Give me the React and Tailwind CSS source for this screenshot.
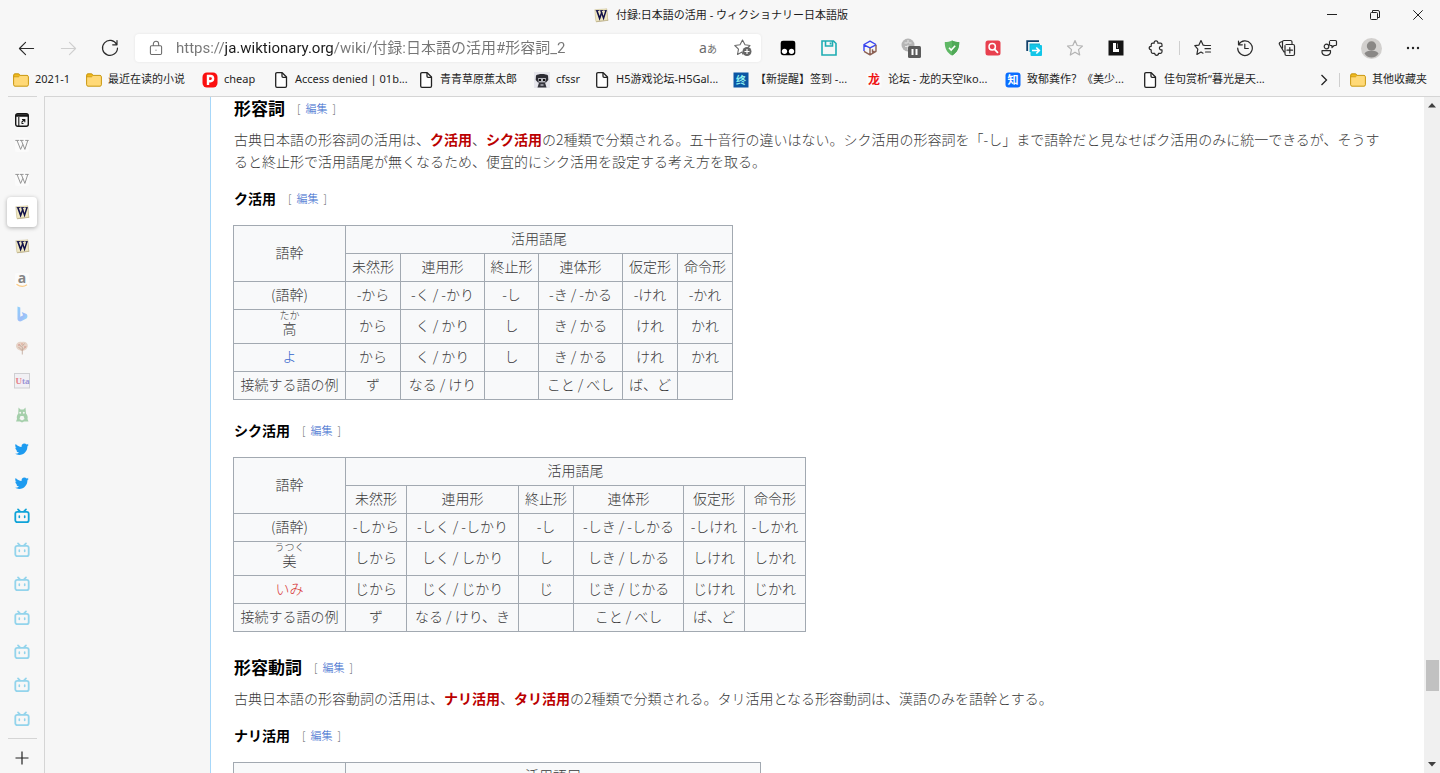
import React from "react";

const CHROME_FONT = "font-['Noto_Sans','Noto_Sans_CJK_SC',sans-serif]";
const PAGE_FONT = "font-['Noto_Sans_CJK_JP',sans-serif]";

/* ---------- shared icons ---------- */

function Line({ size = 18, width = 1.2, className = "text-[#2b2b2b]", children }) {
  return (
    <svg width={size} height={size} viewBox="0 0 18 18" fill="none" stroke="currentColor" strokeWidth={width} strokeLinecap="round" strokeLinejoin="round" className={className} aria-hidden="true">
      {children}
    </svg>
  );
}

function Folder() {
  return (
    <svg width="16" height="16" viewBox="0 0 16 16" aria-hidden="true">
      <path d="M.6 3.4c0-.9.6-1.5 1.4-1.5h3.4c.5 0 .9.2 1.2.6l.6.9H14c.8 0 1.4.6 1.4 1.4v8c0 .8-.6 1.4-1.4 1.4H2c-.8 0-1.4-.6-1.4-1.4z" fill="#ffd977" stroke="#c9970f" />
      <path d="M.8 4.8h4.4c.5 0 .8-.2 1-.5l.8-.9-.8-.9c-.2-.3-.5-.5-.8-.5H2C1.200 2 .8 2.600.8 3.400z" fill="#f2bb1d" stroke="#c9970f" strokeWidth=".8" />
    </svg>
  );
}

function PageIcon() {
  return (
    <svg width="16" height="16" viewBox="0 0 16 16" fill="#fff" stroke="#222" strokeWidth="1.3" strokeLinejoin="round" aria-hidden="true">
      <path d="M2.700 2c0-.8.5-1.300 1.300-1.300h5.200l4.300 4.300v9c0 .8-.5 1.300-1.300 1.300H4c-.8 0-1.300-.5-1.300-1.300z" />
      <path d="M9 .9V4.200c0 .7.4 1.100 1.100 1.100h3.300" fill="none" />
    </svg>
  );
}

function WikTile({ size = 15 }) {
  return (
    <svg width={size} height={size} viewBox="0 0 16 16" aria-hidden="true">
      <path d="M1 2.300 13.800.8 15.300 13.500 2.200 15.300z" fill="#b9ad8a" />
      <path d="M.8 1.800 13.600.9l.9 12L2 14.200z" fill="#f0e8c4" stroke="#cfc49b" strokeWidth=".6" />
      <path d="M1.800 2.700h4M6.700 2.700h3.400M11 2.700h2.600" stroke="#101048" strokeWidth=".9" />
      <path d="M3 2.700 6 11 8.400 4.500" fill="none" stroke="#101048" strokeWidth="1.700" />
      <path d="M7.300 2.700 10.200 11 12.800 2.700" fill="none" stroke="#101048" strokeWidth="1.500" />
    </svg>
  );
}

/* ---------- title bar ---------- */

function TitleBar() {
  return (
    <header className="flex h-[30px] items-center">
      <div className="w-[108px]" />
      <div className="flex flex-1 items-center justify-center gap-[7px] pl-[2px]">
        <WikTile />
        <h1 className="font-['Noto_Sans','Noto_Sans_CJK_JP',sans-serif] text-[11px] text-[#1b1b1b]">付録:日本語の活用 - ウィクショナリー日本語版</h1>
      </div>
      <div className="-ml-[22px] flex text-[#222]">
        <button aria-label="最小化" className="flex w-[43px] items-center justify-center">
          <svg width="10" height="10" stroke="currentColor" fill="none"><path d="M0 4.500h10" /></svg>
        </button>
        <button aria-label="元に戻す" className="flex w-[43px] items-center justify-center">
          <svg width="10" height="10" stroke="currentColor" fill="none"><path d="M.5 3.500q0-1 1-1h5q1 0 1 1v5q0 1-1 1h-5q-1 0-1-1zM2.500 2V.5h5.500q1.500 0 1.500 1.500v5.500H8" /></svg>
        </button>
        <button aria-label="閉じる" className="flex w-[44px] items-center justify-center">
          <svg width="10" height="10" stroke="currentColor" fill="none"><path d="M.3.300l9.400 9.400M9.700.300.300 9.700" /></svg>
        </button>
      </div>
    </header>
  );
}

/* ---------- toolbar ---------- */

const extensions = [
  ["Tampermonkey", (
    <svg width="16" height="16" viewBox="0 0 16 16"><path d="M3 .8h10q2.300 0 2.300 2.300v9.500q0 2.600-2.600 2.600H3.300Q.7 15.200.7 12.600V3.100Q.7.800 3 .800z" fill="#000" /><circle cx="4.500" cy="11.300" r="2.600" fill="#fff" /><circle cx="11.500" cy="11.300" r="2.600" fill="#fff" /></svg>
  )],
  ["保存", (
    <svg width="16" height="16" viewBox="0 0 16 16" fill="none" stroke="#1fadb3" strokeWidth="1.600"><path d="M1 1h11.500L15 3.500V15H1zM4.500 1v5h7V1M9.500 2.500v2" /></svg>
  )],
  ["キューブ", (
    <svg width="16" height="16" viewBox="0 0 16 16" fill="none" strokeWidth="1.400" strokeLinejoin="round"><path d="M2 11V4.500L8 1.200l6 3.300M2 4.800l6 3 6-3" stroke="#3a45f0" /><path d="M14 4.800v6.500l-6 3.500-6-3.500M8 8v6.500M10.500 9.200v3l2-1" stroke="#8b5f52" /></svg>
  )],
  ["一時停止", (
    <svg width="20" height="20" viewBox="0 0 20 20"><circle cx="7" cy="7" r="6.500" fill="#b5b5b5" /><path d="M3.500 5h3M8 5h2.500M7 2v3M4 8.500h6M7 7v5" stroke="#e6e6e6" /><rect x="7" y="8" width="13" height="12" rx="1.500" fill="#5c5c5c" /><path d="M11.500 11v6M15.500 11v6" stroke="#fff" strokeWidth="2" /></svg>
  )],
  ["保護", (
    <svg width="16" height="16" viewBox="0 0 16 16"><path d="M8 .5c2.300 1 4.600 1.500 7.200 1.600C15.500 8 13 13 8 15.600 3 13 .5 8 .8 2.100 3.400 2 5.700 1.500 8 .5z" fill="#5fb865" /><path d="M8 .5c2.300 1 4.600 1.500 7.200 1.600C15.500 8 13 13 8 15.600z" fill="#50a957" /><path d="m5 7.800 2.200 2.200 4-4.200" fill="none" stroke="#fff" strokeWidth="1.600" /></svg>
  )],
  ["検索", (
    <svg width="16" height="16" viewBox="0 0 16 16"><rect x=".5" y=".5" width="15" height="15" rx="2.500" fill="#e8404f" /><circle cx="7.200" cy="6.800" r="3.200" fill="none" stroke="#fff" strokeWidth="1.500" /><path d="m9.600 9.300 2.900 3" stroke="#fff" strokeWidth="1.800" strokeLinecap="round" /></svg>
  )],
  ["転送", (
    <svg width="16" height="16" viewBox="0 0 16 16"><path d="M1.200 11V1.200H13" fill="none" stroke="#12406b" strokeWidth="1.800" /><path d="M3.500 3.500H14V6H7v6H3.500z" fill="#16b5d6" /><rect x="4.500" y="5" width="11.500" height="11" rx="1" fill="#12c6e8" /><path d="M6 10.500h7M10.300 7.500l3 3-3 3" fill="none" stroke="#fff" strokeWidth="1.700" /></svg>
  )],
  ["お気に入り", (
    <Line className="text-[#b4b4b4]"><path d="m9 1.500 2.200 5 5.300.5-4 3.600 1.200 5.400L9 13.200 4.300 16l1.200-5.400-4-3.600 5.300-.5z" /></Line>
  )],
  ["L", (
    <svg width="16" height="16" viewBox="0 0 16 16"><path d="M.5.5h15v15H.5z" fill="#151515" /><path d="M5 3h3v6h3v3H5z" fill="#fff" /><path d="M9.500 3.500V8" stroke="#8b8b8b" /></svg>
  )],
  ["拡張機能", (
    <Line><path d="M6.200 4.200c-.3-1.600.7-2.400 1.800-2.400s2.100.8 1.800 2.400h2.700c.9 0 1.500.6 1.500 1.500v1.600c-1.700-.3-2.600.7-2.600 1.800s.9 2.100 2.600 1.800v1.900c0 .9-.6 1.500-1.500 1.500h-2c0 1.200-.8 2-1.900 2s-1.900-.8-1.900-2h-2c-.9 0-1.500-.6-1.500-1.500v-2c-1.200 0-2-.7-2-1.700s.8-1.800 2-1.800V5.700c0-.9.600-1.500 1.500-1.500z" /></Line>
  )],
];

const browserTools = [
  ["お気に入り一覧", <Line><path d="M11 6.500 9.200 6.200 7 1.500l-2.200 4.700-4 .5 3 3.500-.9 5.200L7 13l2 1.200M11.500 6.500h5M11 9.700h5.500M11.500 13h5" /></Line>],
  ["履歴", <Line><path d="M2.500 2v3.800h3.800M2.700 5.500A7.300 7.300 0 1 1 1.700 9M8.800 5v4.500h3.500" /></Line>],
  ["コレクション", <Line><path d="M7 13H6L1.500 5.500c-.5-1 0-1.800.8-2.200l2-.8M4.500 9V3c0-.9.600-1.500 1.500-1.500h6.500c.9 0 1.500.6 1.500 1.500v1.500M8 5.500h7c.9 0 1.500.6 1.500 1.500v8c0 .9-.6 1.500-1.500 1.500H8.500c-.9 0-1.500-.6-1.500-1.500V6.500M11.800 8.500v5.500M9 11.200h5.500" /></Line>],
  ["フィードバック", <Line><circle cx="6.500" cy="7.500" r="2.300" /><path d="M2 11.700h8.500c.6 3-1.600 4.800-4.300 4.800S1.500 14.700 2 11.700zM10.200 1.500h5.300c.6 0 1 .4 1 1v3c0 .6-.4 1-1 1h-1.300L12 8.500v-2h-1.500c-.6 0-1-.4-1-1v-3" /></Line>],
  ["プロフィール", (
    <svg width="21" height="21" viewBox="0 0 21 21"><circle cx="10.500" cy="10.500" r="10.500" fill="#d2d0ce" /><circle cx="10.500" cy="8" r="4.700" fill="#8a8886" /><path d="M3.500 15.500c1.500-2.300 4-2.700 7-2.700s5.500.4 7 2.700c-1.500 2.500-4 4-7 4s-5.500-1.500-7-4z" fill="#8a8886" /></svg>
  )],
  ["設定など", <svg width="14" height="4" fill="#222"><circle cx="2" cy="2" r="1.200" /><circle cx="7" cy="2" r="1.200" /><circle cx="12" cy="2" r="1.200" /></svg>],
];

function Toolbar() {
  const nav = "flex w-[42px] items-center justify-center";
  return (
    <div className="flex h-9 items-center pr-[6px] pl-[5px]">
      <button aria-label="戻る" className={nav}><Line size={17}><path d="M16.500 9h-15M8 2.500 1.500 9 8 15.500" /></Line></button>
      <button aria-label="進む" className={nav}><Line size={17} className="text-[#cfcfcf]"><path d="M1.500 9h15M10 2.500 16.500 9 10 15.500" /></Line></button>
      <button aria-label="更新" className={nav}><Line><path d="M15.700 5.500A7.500 7.500 0 1 0 16.500 9M16 1.500v4.300h-4.300" /></Line></button>
      <form className="ml-1 flex h-7 min-w-0 flex-1 items-center rounded-[4px] bg-white shadow-[0_0_3px_rgba(0,0,0,0.08)]" onSubmit={(e) => e.preventDefault()}>
        <button type="button" aria-label="サイト情報" className="flex w-[41px] shrink-0 items-center justify-center">
          <Line size={16} className="text-[#6b6b6b]"><path d="M4 6.500h10c.8 0 1.300.5 1.300 1.300v7.200c0 .8-.5 1.300-1.300 1.300H4c-.8 0-1.300-.5-1.300-1.300V7.800C2.700 7 3.200 6.500 4 6.500zM6 6.500V4.500c0-1.800 1.200-3 3-3s3 1.200 3 3v2M9 11.300v.3" /></Line>
        </button>
        <input aria-label="アドレス" defaultValue="https://ja.wiktionary.org/wiki/付録:日本語の活用#形容詞_2" className="min-w-0 flex-1 bg-[linear-gradient(90deg,#767676_49px,#1b1b1b_49px,#1b1b1b_157px,#767676_157px)] bg-clip-text font-['Roboto','Noto_Sans_CJK_JP',sans-serif] text-[15px] text-transparent outline-none" />
        <button type="button" aria-label="翻訳" className="w-[34px] shrink-0 font-['Noto_Sans','Noto_Sans_CJK_JP',sans-serif] text-[14px] leading-5 text-[#6b6b6b]">a<span className="text-[10px]">あ</span></button>
        <button type="button" aria-label="お気に入りに追加" className="flex w-[36px] shrink-0 items-center justify-center">
          <svg width="18" height="18" viewBox="0 0 18 18" fill="none" aria-hidden="true"><path d="M9 15.500 8 13l-4.500 2.500 1-5.400L.8 6.500l5.200-.7L8.500 1 11 5.800l5 .7-2 2" stroke="#6b6b6b" strokeWidth="1.100" strokeLinejoin="round" /><circle cx="13" cy="12.500" r="4.500" fill="#666" /><path d="M13 10v5M10.500 12.500h5" stroke="#fff" strokeWidth="1.100" /></svg>
        </button>
      </form>
      <div className="ml-[6px] flex items-center">
        {extensions.map(([name, icon]) => (
          <button key={name} aria-label={name} className="flex w-[41px] items-center justify-center">{icon}</button>
        ))}
        <div className="mx-[2px] h-[14px] w-px bg-[#cfcfcf]" />
        {browserTools.map(([name, icon]) => (
          <button key={name} aria-label={name} className="flex w-[42px] items-center justify-center">{icon}</button>
        ))}
      </div>
    </div>
  );
}

/* ---------- bookmarks ---------- */

const pIcon = (
  <svg width="16" height="16" viewBox="0 0 16 16"><rect x=".5" y=".5" width="15" height="15" rx="4.500" fill="#fb0f0f" /><path d="M6 13V4h2.500a2.600 2.600 0 0 1 0 5.200H6" fill="none" stroke="#fff" strokeWidth="2.400" /></svg>
);
const catIcon = (
  <svg width="16" height="16" viewBox="0 0 16 16"><rect width="16" height="16" fill="#e6e6ec" /><path d="M2 3.500C4 1.500 12 1.500 14 3.500l.3 4.500-2.300 2.500H4L1.700 8z" fill="#2c2c33" /><path d="M4 6h8l-.8 4.500H4.800z" fill="#b4b4bc" /><path d="M5 7h2v2H5zM9 7h2v2H9z" fill="#111" /><path d="M5 10.500h6l1.500 5h-9z" fill="#34343c" /><path d="M6.500 12h3v2h-3z" fill="#8f8f98" /></svg>
);
const glyphTile = (char, bg, fg, size) => (
  <svg width="16" height="16" viewBox="0 0 16 16"><rect x=".5" y=".5" width="15" height="15" rx={char === "知" ? 3 : 0} fill={bg} /><text x="8" y="12" textAnchor="middle" fontFamily="Noto Sans CJK SC" fontWeight="700" fontSize={size} fill={fg}>{char}</text></svg>
);

const bookmarks = [
  ["2021-1", <Folder />, "w-[73px]"],
  ["最近在读的小说", <Folder />, "w-[116px]"],
  ["cheap", pIcon, "w-[71px]"],
  ["Access denied | 01b...", <PageIcon />, "w-[145px]"],
  ["青青草原蕉太郎", <PageIcon />, "w-[116px]"],
  ["cfssr", catIcon, "w-[60px]"],
  ["H5游戏论坛-H5Gal...", <PageIcon />, "w-[139px]"],
  ["【新提醒】签到 -...", glyphTile("终", "#0b56a4", "#8ff0f0", 10), "w-[133px]"],
  ["论坛 - 龙的天空lko...", glyphTile("龙", "#fbfbfb", "#ef1414", 12), "w-[139px]"],
  ["致郁粪作？《美少...", glyphTile("知", "#0a6cff", "#ffffff", 11), "w-[137px]"],
  ["佳句赏析“暮光是天...", <PageIcon />, "w-[130px]"],
];

function Bookmarks() {
  return (
    <nav aria-label="收藏夹" className="flex h-[30px] items-center pr-[13px] pb-[3px] pl-[13px] text-[11px] text-[#1f1f1f]">
      {bookmarks.map(([label, icon, width]) => (
        <a key={label} href="#" className={`flex shrink-0 items-center gap-[6px] whitespace-nowrap ${width}`}>
          {icon}
          <span>{label}</span>
        </a>
      ))}
      <button aria-label="更多" className="ml-auto flex w-[18px] justify-center">
        <svg width="8" height="12" fill="none" stroke="#222" strokeWidth="1.300"><path d="m1.500 1 5 5-5 5" /></svg>
      </button>
      <div className="mr-[10px] ml-[6px] h-[14px] w-px bg-[#cfcfcf]" />
      <a href="#" className="flex items-center gap-[6px] whitespace-nowrap">
        <Folder />
        <span>其他收藏夹</span>
      </a>
    </nav>
  );
}

/* ---------- vertical tabs ---------- */

const wikipedia = (
  <svg width="16" height="16" viewBox="0 0 16 16"><rect x="1" y="1" width="14" height="14" rx="2" fill="#fbfbfb" /><path d="M1.300 3.400h4M6 3.400h3.600M11.200 3.400h3.500M3 3.400l3.600 9 2.200-5M7.300 3.400l3.600 9 2.900-9" fill="none" stroke="#8b8b8b" strokeWidth=".9" /></svg>
);
const amazon = (
  <svg width="16" height="16" viewBox="0 0 16 16"><rect x="1" y="1" width="14" height="14" rx="2" fill="#fbfbfb" /><text x="8" y="11" textAnchor="middle" fontFamily="Open Sans, sans-serif" fontWeight="700" fontSize="14" fill="#858585">a</text><path d="M2.500 12.300c3.500 2.600 7.500 2.600 10.500.5" fill="none" stroke="#fbcb85" strokeWidth="1.300" /></svg>
);
const bing = (
  <svg width="16" height="16" viewBox="0 0 16 16"><defs><linearGradient id="bing" x1="0" y1="0" x2="1" y2="1"><stop stopColor="#8fd0fb" /><stop offset=".6" stopColor="#9fbdf8" /><stop offset="1" stopColor="#8fe0f8" /></linearGradient></defs><path d="M3.500.5 6.300 1.500v9.200l2.800-1.500L7.700 6l4.800 2c1.300.8 1.300 3.600 0 4.600l-5.400 2.700c-1.500.5-3.600-.4-3.600-2.200z" fill="url(#bing)" /></svg>
);
const tree = (
  <svg width="16" height="16" viewBox="0 0 16 16"><path d="M8 2c3-1 6 .8 5.800 4-.3 2.500-2 4.300-5 5C5 11 2 8.500 2 6c0-3 3-5 6-4z" fill="#e6d3c6" /><path d="M8.300 14.500V7M8 10.500 4.500 7M8.500 10l3.500-3.500M5 4l2.500 3M10.500 3.500 8 6.500" stroke="#bca294" fill="none" strokeWidth=".8" /><circle cx="5" cy="5" r="1" fill="#dba9a0" /><circle cx="11" cy="7" r="1" fill="#dca79a" /><circle cx="8" cy="4" r="1" fill="#e0b5a4" /></svg>
);
const uta = (
  <svg width="16" height="16" viewBox="0 0 16 16"><rect x=".5" y=".5" width="15" height="14.500" fill="#f1f0f4" stroke="#cfcfd2" /><text x="1.500" y="11" fontFamily="Liberation Sans Narrow" fontWeight="700" fontSize="9" fill="#e6808a">U<tspan fill="#9a94d6">ta</tspan></text></svg>
);
const greenCat = (
  <svg width="16" height="16" viewBox="0 0 16 16"><path d="M4.500.5 6.500 2.500h3l2-2 .5 6c1.500 1.500 2 3.500 1.500 5.500l1 2.500H10L8 15.500 6 14.500H2l1-2.500C2.500 10 3 8 4.300 6.500z" fill="#a5cfab" /><circle cx="6.200" cy="5.700" r="1" fill="#f5f5f5" /><circle cx="9.800" cy="5.700" r="1" fill="#f5f5f5" /><path d="M6.500 9h3l1 3-2.500 1.500L5.500 12z" fill="#f5f5f5" /></svg>
);
const twitter = (
  <svg width="14" height="14" viewBox="0 0 24 24" fill="#1d9bf0"><path d="M23.600 4.900c-.9.400-1.800.6-2.800.8 1-.6 1.800-1.600 2.100-2.700-.9.600-2 1-3.100 1.200a4.900 4.900 0 0 0-8.400 4.500C7.300 8.500 3.700 6.600 1.300 3.600a4.900 4.900 0 0 0 1.500 6.600c-.8 0-1.600-.2-2.200-.6v.1c0 2.400 1.700 4.400 3.900 4.800-.7.200-1.500.2-2.200.1.600 2 2.400 3.400 4.600 3.400A9.900 9.900 0 0 1-.4 20a13.900 13.900 0 0 0 7.600 2.200c9.100 0 14.300-7.700 14-14.700 1-.7 1.800-1.600 2.400-2.600z" /></svg>
);
const bili = (color) => (
  <svg width="16" height="16" viewBox="0 0 16 16" fill="none" stroke={color} strokeLinecap="round"><rect x="1.300" y="3.800" width="13.400" height="10.400" rx="2" strokeWidth="1.800" /><path d="m4 1.300 2 2M12 1.300l-2 2" strokeWidth="1.700" /><path d="M5.300 8v1.500M10.700 8v1.500" strokeWidth="1.600" /></svg>
);
const dim = bili("#93d4ec");

const tabs = [
  ["Wikipedia 1", wikipedia], ["Wikipedia 2", wikipedia],
  ["ウィクショナリー 1", <WikTile />, true], ["ウィクショナリー 2", <WikTile />],
  ["Amazon", amazon], ["Bing", bing], ["木", tree], ["Uta", uta], ["猫", greenCat],
  ["Twitter 1", twitter], ["Twitter 2", twitter], ["bilibili 1", bili("#0fa3d8")],
  ["bilibili 2", dim], ["bilibili 3", dim], ["bilibili 4", dim], ["bilibili 5", dim], ["bilibili 6", dim], ["bilibili 7", dim],
];

function TabStrip() {
  return (
    <aside className="flex w-11 shrink-0 flex-col items-center">
      <div className="h-px w-[29px] bg-[#d5d5d5]" />
      <button aria-label="タブ操作メニュー" className="flex h-[31px] items-center justify-center pt-[14px]">
        <svg width="14" height="14" viewBox="0 0 14 14" fill="none" stroke="#161616"><rect x=".7" y=".7" width="12.600" height="12.600" rx="2" strokeWidth="1.400" /><path d="M1 2.500h12" strokeWidth="2.500" /><path d="M3.800 4v9M6.500 9.500l3-3M7 6.500h2.800v2.700M6.500 10.500h2" strokeWidth="1.100" /></svg>
      </button>
      <ul className="flex w-full min-h-0 flex-1 flex-col">
        {tabs.map(([name, icon, active]) => (
          <li key={name} className="flex min-h-0 flex-1 items-center justify-center">
            <button aria-label={name} className={active ? "flex size-[30px] items-center justify-center rounded-[4px] bg-white shadow-[0_1px_4px_rgba(0,0,0,0.3)]" : "flex size-[30px] items-center justify-center"}>{icon}</button>
          </li>
        ))}
      </ul>
      <div className="mt-[2px] h-px w-[29px] bg-[#d5d5d5]" />
      <button aria-label="新しいタブ" className="flex h-[34px] items-center justify-center pt-1">
        <svg width="14" height="14" stroke="#222" strokeWidth="1.200"><path d="M7 .5v13M.5 7h13" /></svg>
      </button>
    </aside>
  );
}

/* ---------- article ---------- */

function Heading({ level = 4, className = "", children }) {
  const Tag = level === 3 ? "h3" : "h4";
  const size = level === 3 ? "text-[17px] leading-[22px]" : "text-[14px] leading-[22px]";
  return (
    <div className={`flex items-center gap-3 ${className}`}>
      <Tag className={`font-bold text-black ${size}`}>{children}</Tag>
      <span className="flex gap-[5px] text-[11px] leading-[22px] text-[#54595d]">
        [<a href="#" className="text-[#3366cc]">編集</a>]
      </span>
    </div>
  );
}

function Red({ children }) {
  return <a href="#" className="font-bold text-[#ba0000]">{children}</a>;
}

const forms = ["未然形", "連用形", "終止形", "連体形", "仮定形", "命令形"];
const ku = ["から", "く / かり", "し", "き / かる", "けれ", "かれ"];
const shiku = ["しから", "しく / しかり", "し", "しき / しかる", "しけれ", "しかれ"];
const ruby = (base, top) => <ruby>{base}<rt className="text-[10px] leading-[12px]">{top}</rt></ruby>;

const kuRows = [
  ["(語幹)", "-から", "-く / -かり", "-し", "-き / -かる", "-けれ", "-かれ"],
  [ruby("高", "たか"), ...ku],
  [<a href="#" className="text-[#3366cc]">よ</a>, ...ku],
  ["接続する語の例", "ず", "なる / けり", "", "こと / べし", "ば、ど", ""],
];
const shikuRows = [
  ["(語幹)", "-しから", "-しく / -しかり", "-し", "-しき / -しかる", "-しけれ", "-しかれ"],
  [ruby("美", "うつく"), ...shiku],
  [<a href="#" className="text-[#d73333]">いみ</a>, "じから", "じく / じかり", "じ", "じき / じかる", "じけれ", "じかれ"],
  ["接続する語の例", "ず", "なる / けり、き", "", "こと / べし", "ば、ど", ""],
];

function Conjugation({ cols, rows }) {
  const cell = "border border-[#a2a9b1] px-0 pt-0 pb-1 text-center font-light";
  const rubyCell = "border border-[#a2a9b1] p-0 text-center align-top leading-[14px] font-light";
  return (
    <table className="mt-4 -ml-px table-fixed border-collapse bg-[#f8f9fa] leading-[22px] whitespace-nowrap">
      <colgroup>{cols.map((c, i) => <col key={i} className={c} />)}</colgroup>
      <thead>
        <tr className="h-7"><th rowSpan={2} className={cell}>語幹</th><th colSpan={6} className={cell}>活用語尾</th></tr>
        <tr className="h-7">{forms.map((f) => <th key={f} className={cell}>{f}</th>)}</tr>
      </thead>
      <tbody>
        {rows.map((row, r) => (
          <tr key={r} className={r === 1 ? "h-[34px]" : "h-7"}>
            {row.map((c, i) => <td key={i} className={i === 0 && r === 1 ? rubyCell : cell}>{c}</td>)}
          </tr>
        ))}
      </tbody>
    </table>
  );
}

function Article() {
  return (
    <main className={`min-w-0 flex-1 overflow-hidden border-l border-[#a7d7f9] bg-white pr-8 pl-[23px] text-[14px] leading-[22px] font-light text-[#3a3a3a] ${PAGE_FONT}`}>
      <Heading level={3}>形容詞</Heading>
      <p className="mt-[9px]">
        古典日本語の形容詞の活用は、<Red>ク活用</Red>、<Red>シク活用</Red>の2種類で分類される。五十音行の違いはない。シク活用の形容詞を「-し」まで語幹だと見なせばク活用のみに統一できるが、そうすると終止形で活用語尾が無くなるため、便宜的にシク活用を設定する考え方を取る。
      </p>
      <Heading className="mt-[15px]">ク活用</Heading>
      <Conjugation cols={["w-[112px]", "w-[55px]", "w-[84px]", "w-[54px]", "w-[84px]", "w-[55px]", "w-[55px]"]} rows={kuRows} />
      <Heading className="mt-[19px]">シク活用</Heading>
      <Conjugation cols={["w-[112px]", "w-[61px]", "w-[112px]", "w-[55px]", "w-[110px]", "w-[61px]", "w-[61px]"]} rows={shikuRows} />
      <Heading level={3} className="mt-6">形容動詞</Heading>
      <p className="mt-[9px]">
        古典日本語の形容動詞の活用は、<Red>ナリ活用</Red>、<Red>タリ活用</Red>の2種類で分類される。タリ活用となる形容動詞は、漢語のみを語幹とする。
      </p>
      <Heading className="mt-[15px]">ナリ活用</Heading>
      <Conjugation cols={["w-[112px]", "w-[55px]", "w-[112px]", "w-[55px]", "w-[83px]", "w-[55px]", "w-[55px]"]} rows={kuRows} />
    </main>
  );
}

function ScrollBar() {
  return (
    <div className="flex w-4 shrink-0 flex-col items-center bg-[#f0f0f0] py-[6px]">
      <svg width="8" height="5" fill="#404040"><path d="M4 0l4 4.500H0z" /></svg>
      <div className="grow-[553]" />
      <div className="h-[31px] w-[13px] bg-[#c1c1c1]" />
      <div className="grow-[71]" />
      <svg width="8" height="5" fill="#404040"><path d="M4 4.500 0 0h8z" /></svg>
    </div>
  );
}

export default function App() {
  return (
    <div className={`flex h-screen flex-col overflow-hidden bg-[#f7f7f7] ${CHROME_FONT}`}>
      <TitleBar />
      <Toolbar />
      <Bookmarks />
      <div className="flex min-h-0 flex-1">
        <TabStrip />
        <div className="flex min-w-0 flex-1 border-t border-l border-[#d5d5d5]">
          <div className="w-[165px] shrink-0 bg-[#f6f6f6]" />
          <Article />
          <ScrollBar />
        </div>
      </div>
    </div>
  );
}
